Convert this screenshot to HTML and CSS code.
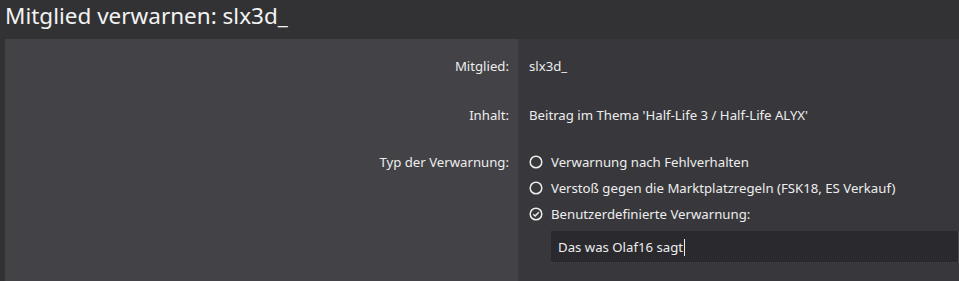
FILE: index.html
```html
<!DOCTYPE html>
<html lang="de">
<head>
    <meta charset="UTF-8">
    <title>Mitglied verwarnen</title>
    <link rel="stylesheet" href="styles.css">
</head>
<body>

<h1 class="page-title">Mitglied verwarnen: slx3d_</h1>

<div class="form-panel">
    <div class="form-row row-member">
        <div class="form-label">Mitglied:</div>
        <div class="form-value">slx3d_</div>
    </div>

    <div class="form-row row-content">
        <div class="form-label">Inhalt:</div>
        <div class="form-value">Beitrag im Thema 'Half-Life 3 / Half-Life ALYX'</div>
    </div>

    <div class="form-row row-type">
        <div class="form-label">Typ der Verwarnung:</div>
        <div class="form-value">
            <ul class="choice-list">
                <li class="choice">
                    <svg class="radio" viewBox="0 0 14 14"><circle cx="7" cy="7" r="5.8" /></svg>
                    Verwarnung nach Fehlverhalten
                </li>
                <li class="choice">
                    <svg class="radio" viewBox="0 0 14 14"><circle cx="7" cy="7" r="5.8" /></svg>
                    Verstoß gegen die Marktplatzregeln (FSK18, ES Verkauf)
                </li>
                <li class="choice">
                    <svg class="radio" viewBox="0 0 14 14"><circle cx="7" cy="7" r="5.8" /><path d="M4.3 7.2 L6.2 9 L9.8 5.2" /></svg>
                    Benutzerdefinierte Verwarnung:
                </li>
            </ul>
            <div class="text-input">Das was Olaf16 sagt<span class="caret"></span></div>
        </div>
    </div>
</div>

</body>
</html>
```

FILE: styles.css
```css
* {
    margin: 0;
    padding: 0;
    box-sizing: border-box;
}

body {
    font-family: 'Noto Sans', 'Open Sans', sans-serif;
    background-color: #323235;
    color: #ededed;
    padding: 0 0 0 5px;
    height: 281px;
    overflow: hidden;
}

.page-title {
    font-weight: normal;
    font-size: 22.5px;
    line-height: 32px;
    height: 39px;
    color: #f2f2f2;
}

.form-panel {
    height: 242px;
    background: linear-gradient(to right, #434247 513px, #3b3a3f 513px, #3b3a3f 514px, #38383c 514px);
}

.form-row {
    display: grid;
    grid-template-columns: 514px 1fr;
    font-size: 13.2px;
    line-height: 18px;
}

.row-member {
    padding: 18px 0 13px;
}

.row-content {
    padding: 18px 0 11px;
}

.row-type {
    padding-top: 18px;
}

.form-label {
    text-align: right;
    padding-right: 10px;
}

.form-value {
    padding-left: 10px;
}

.choice-list {
    list-style: none;
}

.choice {
    display: flex;
    align-items: center;
    gap: 8px;
    margin-bottom: 8px;
}

.radio {
    width: 14px;
    height: 14px;
    fill: none;
    stroke: #ededed;
    stroke-width: 1.5;
}

.text-input {
    margin-left: 22px;
    height: 32px;
    padding: 7px 7px;
    background-color: #2a292e;
    border-right: 1px solid #4a494f;
    border-bottom: 1px dotted #4a494f;
}

.caret {
    display: inline-block;
    width: 1px;
    height: 17px;
    margin-left: 1px;
    vertical-align: -4px;
    background-color: #ededed;
}
```
